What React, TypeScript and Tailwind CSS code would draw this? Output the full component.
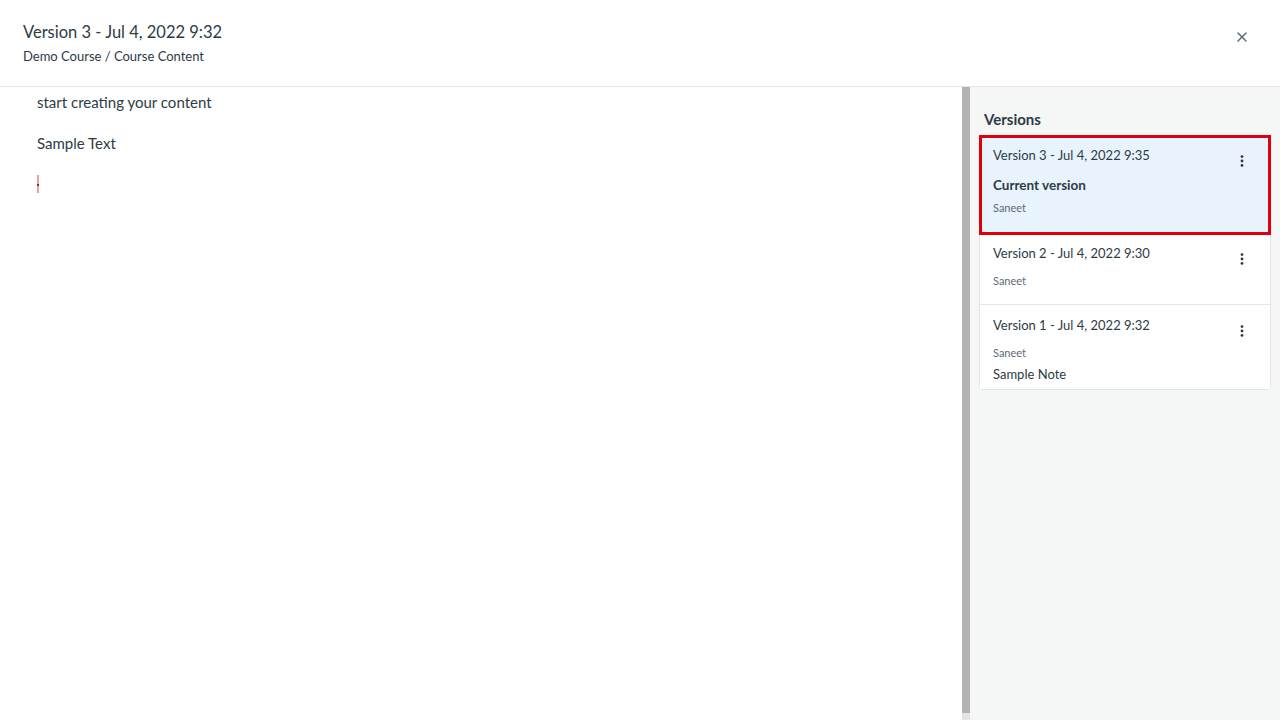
import { X } from "lucide-react";

const Kebab = () => (
  <svg width="4" height="12" viewBox="0 0 4 12" className="text-[#2d3b45]">
    <circle cx="2" cy="1.6" r="1.4" fill="currentColor" />
    <circle cx="2" cy="6" r="1.4" fill="currentColor" />
    <circle cx="2" cy="10.4" r="1.4" fill="currentColor" />
  </svg>
);

interface VersionProps {
  title: string;
  author: string;
  current?: boolean;
  note?: string;
  last?: boolean;
}

const VersionItem = ({ title, author, current, note, last }: VersionProps) => (
  <div
    className={`relative pl-[13px] pr-[26px] ${
      current
        ? "bg-[#e8f3fd] h-[100px] -mx-px -mt-px pt-[10px]"
        : last
        ? "bg-white pt-[10px] pb-[5px]"
        : "bg-white h-[70px] pt-[8px] border-b border-[#e6e6e6]"
    }`}
  >
    {current && <div className="absolute inset-0 border-[3px] border-[#e0000b] pointer-events-none" />}
    <div className={`flex items-start justify-between ${current ? "pl-px" : ""}`}>
      <p className="text-[13px] leading-[20px] text-[#2d3b45]">{title}</p>
      <div className={`pt-[10px] ${current ? "mr-[1px]" : ""}`}>
        <Kebab />
      </div>
    </div>
    {current && (
      <p className="pl-px mt-[8px] text-[13.5px] font-bold leading-[20px] text-[#2d3b45]">Current version</p>
    )}
    <p className={`text-[11px] leading-[16px] text-[#5b6b77] ${current ? "pl-px mt-[5px]" : "mt-[8px]"}`}>
      {author}
    </p>
    {note && <p className="text-[13px] leading-[20px] text-[#2d3b45] mt-[3px]">{note}</p>}
  </div>
);

export default function App() {
  return (
    <div className="w-[1280px] h-[720px] flex flex-col bg-white overflow-hidden font-['Lato','Liberation_Sans',sans-serif] text-[#2d3b45]">
      {/* Header */}
      <div className="h-[87px] shrink-0 border-b border-[#e3e5e6] flex items-start justify-between pl-[23px] pr-[30px] pt-[20px]">
        <div>
          <h1 className="text-[16.5px] leading-[24px] text-[#2d3b45]">Version 3 - Jul 4, 2022 9:32</h1>
          <p className="text-[13px] leading-[20px] mt-[2px] text-[#2d3b45]">Demo Course / Course Content</p>
        </div>
        <X size={16} strokeWidth={2.2} className="text-[#5b6b77] mt-[9px]" />
      </div>

      <div className="flex flex-1 min-h-0">
        {/* Content */}
        <div className="w-[962px] pl-[37px] pt-[4px] text-[15px] leading-[22px]">
          <p>start creating your content</p>
          <p className="mt-[19px]">Sample Text</p>
          <div className="mt-[21px] w-[2px] h-[18px] bg-[#f39ca1] relative">
            <div className="absolute left-0 top-[9px] w-[2px] h-[2px] bg-[#6b3b3e]" />
          </div>
        </div>

        {/* Scrollbar */}
        <div className="w-[8px] flex flex-col bg-[#f1f1f1]">
          <div className="flex-1 bg-[#b3b3b3]" />
          <div className="h-[7px] bg-[#e4e4e4]" />
        </div>

        {/* Sidebar */}
        <div className="flex-1 bg-[#f5f6f6] px-[9px] pt-[22px]">
          <h2 className="pl-[5px] text-[15px] font-bold leading-[20px] text-[#2d3b45] mb-[6px]">Versions</h2>
          <div className="border border-[#e3e5e6] rounded-[4px] bg-white">
            <VersionItem title="Version 3 - Jul 4, 2022 9:35" author="Saneet" current />
            <VersionItem title="Version 2 - Jul 4, 2022 9:30" author="Saneet" />
            <VersionItem title="Version 1 - Jul 4, 2022 9:32" author="Saneet" note="Sample Note" last />
          </div>
        </div>
      </div>
    </div>
  );
}
